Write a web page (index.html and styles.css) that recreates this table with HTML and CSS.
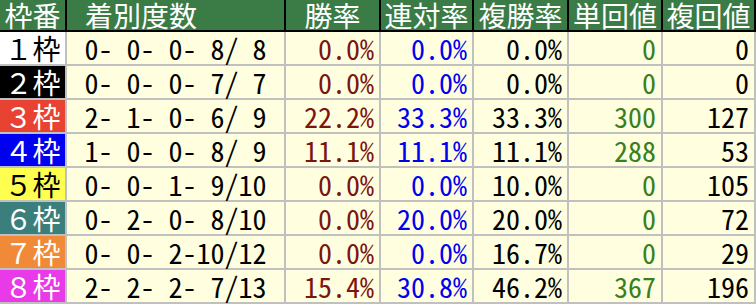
FILE: index.html
```html
<!DOCTYPE html>
<html lang="ja">
<head>
<meta charset="utf-8">
<link rel="stylesheet" href="styles.css">
</head>
<body>
<div class="table">
  <div class="row head">
    <div class="c frame-h">枠番</div>
    <div class="c rec-h">着別度数</div>
    <div class="c ctr">勝率</div>
    <div class="c ctr">連対率</div>
    <div class="c ctr">複勝率</div>
    <div class="c ctr">単回値</div>
    <div class="c ctr">複回値</div>
  </div>
  <div class="row">
    <div class="c frame f1">１枠</div>
    <div class="c rec">0- 0- 0- 8/ 8</div>
    <div class="c num win">0.0%</div>
    <div class="c num ren">0.0%</div>
    <div class="c num">0.0%</div>
    <div class="c num tan">0</div>
    <div class="c num">0</div>
  </div>
  <div class="row">
    <div class="c frame f2">２枠</div>
    <div class="c rec">0- 0- 0- 7/ 7</div>
    <div class="c num win">0.0%</div>
    <div class="c num ren">0.0%</div>
    <div class="c num">0.0%</div>
    <div class="c num tan">0</div>
    <div class="c num">0</div>
  </div>
  <div class="row">
    <div class="c frame f3">３枠</div>
    <div class="c rec">2- 1- 0- 6/ 9</div>
    <div class="c num win">22.2%</div>
    <div class="c num ren">33.3%</div>
    <div class="c num">33.3%</div>
    <div class="c num tan">300</div>
    <div class="c num">127</div>
  </div>
  <div class="row">
    <div class="c frame f4">４枠</div>
    <div class="c rec">1- 0- 0- 8/ 9</div>
    <div class="c num win">11.1%</div>
    <div class="c num ren">11.1%</div>
    <div class="c num">11.1%</div>
    <div class="c num tan">288</div>
    <div class="c num">53</div>
  </div>
  <div class="row">
    <div class="c frame f5">５枠</div>
    <div class="c rec">0- 0- 1- 9/10</div>
    <div class="c num win">0.0%</div>
    <div class="c num ren">0.0%</div>
    <div class="c num">10.0%</div>
    <div class="c num tan">0</div>
    <div class="c num">105</div>
  </div>
  <div class="row">
    <div class="c frame f6">６枠</div>
    <div class="c rec">0- 2- 0- 8/10</div>
    <div class="c num win">0.0%</div>
    <div class="c num ren">20.0%</div>
    <div class="c num">20.0%</div>
    <div class="c num tan">0</div>
    <div class="c num">72</div>
  </div>
  <div class="row">
    <div class="c frame f7">７枠</div>
    <div class="c rec">0- 0- 2-10/12</div>
    <div class="c num win">0.0%</div>
    <div class="c num ren">0.0%</div>
    <div class="c num">16.7%</div>
    <div class="c num tan">0</div>
    <div class="c num">29</div>
  </div>
  <div class="row">
    <div class="c frame f8">８枠</div>
    <div class="c rec">2- 2- 2- 7/13</div>
    <div class="c num win">15.4%</div>
    <div class="c num ren">30.8%</div>
    <div class="c num">46.2%</div>
    <div class="c num tan">367</div>
    <div class="c num">196</div>
  </div>
</div>
</body>
</html>
```
FILE: styles.css
```css
html, body {
  margin: 0;
  padding: 0;
  background: #c0c0c0;
}
.table {
  width: 756px;
  font-family: "Noto Sans Mono CJK JP", "Noto Sans CJK JP", monospace;
  font-size: 28px;
  color: #000;
}
.row {
  display: grid;
  grid-template-columns: 65px 217px 93px 91px 93px 92px 91px;
  grid-template-rows: 32px;
  column-gap: 2px;
  padding: 0 2px 2px 0;
  background: #c0c0c0;
}
.row.head {
  background: #000;
  grid-template-rows: 30px;
}
.c {
  background: #ffffe0;
  display: flex;
  align-items: center;
  white-space: pre;
  line-height: 30px;
}
.head .c {
  background: #3a7b46;
  color: #fff;
}
.ctr { justify-content: center; }
.frame-h { justify-content: center; }
.rec-h { padding-left: 18px; }
.frame { justify-content: center; color: #fff; }
.rec { justify-content: center; }
.num { justify-content: flex-end; padding-right: 5px; }
.win { color: #7d1410; }
.ren { color: #0000f0; }
.tan { color: #3a7f1e; }
.f1 { background: #fff; color: #000; }
.f2 { background: #000; }
.f3 { background: #e84232; }
.f4 { background: #0000f0; }
.f5 { background: #ffff50; color: #000; }
.f6 { background: #3a7f7b; }
.f7 { background: #f08a38; }
.f8 { background: #e83ae8; }
```
